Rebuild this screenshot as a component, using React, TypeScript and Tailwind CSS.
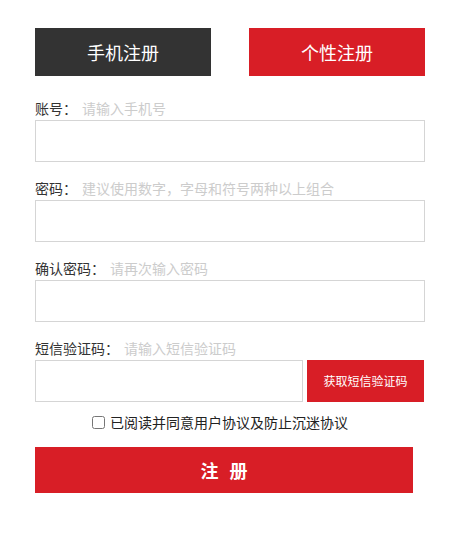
const fields = [
  { label: "账号：", hint: "请输入手机号" },
  { label: "密码：", hint: "建议使用数字，字母和符号两种以上组合" },
  { label: "确认密码：", hint: "请再次输入密码" },
];

const font = { fontFamily: '"Noto Sans CJK SC", "Noto Sans", sans-serif' };

export default function App() {
  return (
    <div className="w-[451px] h-[539px] bg-white text-[#333]" style={font}>
      <div className="pt-[28px] px-[35px] w-[390px] box-content">
        {/* tabs */}
        <div className="flex justify-between">
          <button className="w-[176px] h-[48px] bg-[#333333] text-white text-[18px]">手机注册</button>
          <button className="w-[176px] h-[48px] bg-[#d81e26] text-white text-[18px]">个性注册</button>
        </div>

        <div className="mt-[22px]">
          {fields.map((f) => (
            <div key={f.label} className="mb-[16px]">
              <div className="flex items-center h-[20px] mb-[2px] text-[14px] leading-[20px]">
                <span>{f.label}</span>
                <span className="ml-[5px] text-[#cccccc]">{f.hint}</span>
              </div>
              <input className="block w-full h-[42px] border border-[#d5d5d5] outline-none px-2" />
            </div>
          ))}

          <div>
            <div className="flex items-center h-[20px] mb-[2px] text-[14px] leading-[20px]">
              <span>短信验证码：</span>
              <span className="ml-[5px] text-[#cccccc]">请输入短信验证码</span>
            </div>
            <div className="flex h-[42px]">
              <input className="block w-[268px] h-full border border-[#d5d5d5] outline-none px-2" />
              <button className="ml-[4px] w-[117px] h-full bg-[#d81e26] text-white text-[12px]">获取短信验证码</button>
            </div>
          </div>

          <label className="flex items-center h-[20px] mt-[10px] pl-[57px] text-[14px] text-[#222]">
            <input type="checkbox" className="w-[13px] h-[13px] m-0" />
            <span className="ml-[5px]">已阅读并同意用户协议及防止沉迷协议</span>
          </label>

          <button className="mt-[15px] w-[378px] h-[46px] bg-[#d81e26] text-white text-[18px] font-bold flex items-center justify-center gap-[11px]">
            <span>注</span>
            <span>册</span>
          </button>
        </div>
      </div>
    </div>
  );
}
